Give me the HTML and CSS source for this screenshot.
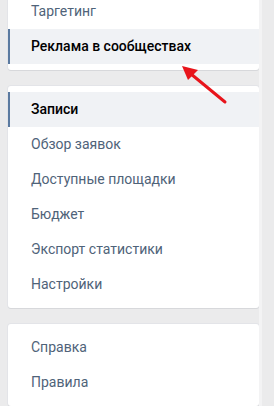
FILE: index.html
```html
<!DOCTYPE html>
<html lang="ru">
<head>
    <meta charset="UTF-8">
    <title>Рекламный кабинет</title>
    <link rel="stylesheet" href="styles.css">
</head>
<body>
    <div class="layout">
        <div class="side">
            <div class="menu first">
                <a class="item">Таргетинг</a>
                <a class="item active">Реклама в сообществах</a>
            </div>

            <div class="menu">
                <a class="item active">Записи</a>
                <a class="item">Обзор заявок</a>
                <a class="item">Доступные площадки</a>
                <a class="item">Бюджет</a>
                <a class="item">Экспорт статистики</a>
                <a class="item">Настройки</a>
            </div>

            <div class="menu">
                <a class="item">Справка</a>
                <a class="item">Правила</a>
            </div>
        </div>
        <div class="strip"></div>
    </div>

    <!-- pointer drawn over the menu -->
    <svg class="arrow" width="274" height="406" viewBox="0 0 274 406">
        <line x1="225" y1="102" x2="191" y2="74" stroke="#e8141b" stroke-width="3" stroke-linecap="round"/>
        <polygon points="182,66 198,70 188,80" fill="#e8141b"/>
    </svg>
</body>
</html>
```

FILE: styles.css
```css
body {
    margin: 0;
    background: #ebebec;
    font-family: Roboto, "Open Sans", Arial, sans-serif;
    font-size: 14px;
    overflow: hidden;
}
.layout {
    display: flex;
    height: 406px;
}
.side {
    width: 251px;
    margin-left: 8px;
}
.strip {
    width: 3px;
    background: #f3f3f4;
}
.menu {
    background: #fff;
    border-radius: 3px;
    box-shadow: 0 1px 0 0 #d7d8db, 0 0 0 1px #e3e4e8;
    padding: 6px 0;
    margin-bottom: 16px;
}
.menu.first {
    margin-top: -12px;
}
.item {
    display: block;
    height: 35px;
    line-height: 35px;
    padding-left: 23px;
    color: #4f6379;
    text-decoration: none;
}
.item.active {
    background: #f0f2f5;
    color: #000;
    font-weight: 500;
    padding-left: 21px;
    border-left: 2px solid #5b7aa0;
}
.arrow {
    position: absolute;
    left: 0;
    top: 0;
}
```
